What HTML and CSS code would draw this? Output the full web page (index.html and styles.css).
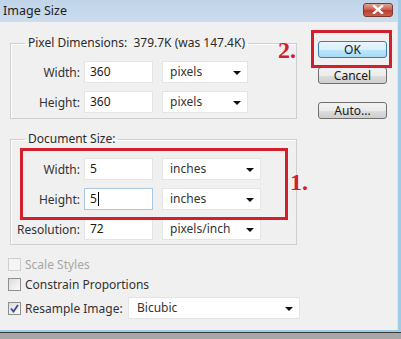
FILE: index.html
```html
<!DOCTYPE html>
<html>
<head>
<meta charset="utf-8">
<link rel="stylesheet" href="styles.css">
</head>
<body>
<div class="window">
  <div class="titlebar">
    <span class="title">Image Size</span>
    <span class="close"><svg width="14" height="9" viewBox="0 0 14 9"><path d="M3 1 L11 8 M11 1 L3 8" stroke="#fff" stroke-width="2.4" stroke-linecap="square"/></svg></span>
  </div>
  <div class="content">
    <div class="main">
      <fieldset class="group group-pixel">
        <legend>Pixel Dimensions:&nbsp; 379.7K (was 147.4K)</legend>
        <div class="row">
          <span class="label">Width:</span>
          <span class="input">360</span>
          <span class="select sel-short">pixels<i class="arrow"></i></span>
        </div>
        <div class="row">
          <span class="label">Height:</span>
          <span class="input">360</span>
          <span class="select sel-short">pixels<i class="arrow"></i></span>
        </div>
      </fieldset>
      <fieldset class="group group-doc">
        <legend>Document Size:</legend>
        <div class="row">
          <span class="label">Width:</span>
          <span class="input">5</span>
          <span class="select">inches<i class="arrow"></i></span>
        </div>
        <div class="row">
          <span class="label">Height:</span>
          <span class="input focused">5<i class="caret"></i></span>
          <span class="select">inches<i class="arrow"></i></span>
        </div>
        <div class="row">
          <span class="label">Resolution:</span>
          <span class="input">72</span>
          <span class="select">pixels/inch<i class="arrow"></i></span>
        </div>
      </fieldset>
      <div class="checks">
        <div class="check disabled"><span class="box"></span>Scale Styles</div>
        <div class="check"><span class="box"></span>Constrain Proportions</div>
        <div class="check check-resample"><span class="box checked"><svg width="9" height="9" viewBox="0 0 9 9"><path d="M1 4.5 L3.5 7.5 L8 1" fill="none" stroke="#3b4a8c" stroke-width="1.8"/></svg></span><span class="check-text">Resample Image:</span><span class="select sel-wide">Bicubic<i class="arrow"></i></span></div>
      </div>
    </div>
    <div class="side">
      <span class="btn btn-default">OK</span>
      <span class="btn">Cancel</span>
      <span class="btn btn-auto">Auto...</span>
    </div>
  </div>
  <div class="bottom"></div>
  <div class="mark mark-box1"></div>
  <div class="mark mark-box2"></div>
  <div class="mark-num num1">1.</div>
  <div class="mark-num num2">2.</div>
</div>
</body>
</html>
```
FILE: styles.css
```css
* { box-sizing: border-box; }
html, body { margin: 0; padding: 0; }
body {
  background: #a7a7a7;
  font-family: "Noto Sans", "Open Sans", sans-serif;
  font-size: 12px;
  color: #1a1a1a;
}
.window {
  position: relative;
  width: 401px;
  height: 339px;
  overflow: hidden;
  background: #a7a7a7;
}
.titlebar {
  height: 22px;
  display: flex;
  align-items: center;
  justify-content: space-between;
  padding: 0 5px 0 3px;
  background: linear-gradient(#c0d4e9, #cbdcee);
  border-right: 3px solid #9fcbe6;
}
.title {
  font-size: 12.5px;
  color: #1e1e1e;
  line-height: 16px;
}
.close {
  width: 30px;
  height: 14px;
  margin-top: -3px;
  border: 1px solid #7b3a30;
  border-radius: 3px;
  background: linear-gradient(#e0a595, #c9594a 50%, #b83c2d 51%, #c9604c);
  display: flex;
  align-items: center;
  justify-content: center;
}
.close svg { display: block; }
.content {
  height: 308px;
  display: flex;
  background: #f0f0f0;
  border-right: 3px solid #9fcbe6;
  box-shadow: inset -1px 0 0 #e4e4e4;
}
.main {
  width: 297px;
  flex-shrink: 0;
  padding-left: 8px;
}
.group {
  margin: 0 0 0 2px;
  padding: 0;
  border: 1px solid #cfcfcf;
  width: 287px;
  box-shadow: 1px 1px 0 #fff inset;
}
.group legend {
  margin-left: 14px;
  padding: 0 3px;
  line-height: 16px;
  color: #2a2a2a;
}
.group-pixel {
  margin-top: 13px;
  padding: 10px 0 5px 0;
}
.group-doc {
  margin-top: 12px;
  padding: 11px 0 4px 0;
}
.row {
  display: flex;
  align-items: center;
  height: 22px;
  margin-bottom: 8px;
}
.row:last-child { margin-bottom: 0; }
.label {
  width: 69px;
  text-align: right;
  color: #333;
  margin-right: 4px;
}
.input {
  width: 69px;
  height: 22px;
  background: #fff;
  border: 1px solid #e4e4e4;
  padding-left: 5px;
  line-height: 20px;
  display: flex;
  align-items: center;
}
.input.focused { border-color: #a9c6e2; }
.caret {
  display: inline-block;
  width: 1px;
  height: 14px;
  background: #000;
  margin-left: 1px;
}
.select {
  position: relative;
  flex-shrink: 0;
  width: 99px;
  height: 22px;
  margin-left: 9px;
  background: #fff;
  border: 1px solid #e4e4e4;
  padding-left: 7px;
  line-height: 20px;
  color: #333;
}
.sel-short { width: 86px; }
.arrow {
  position: absolute;
  right: 6px;
  top: 9px;
  width: 0;
  height: 0;
  border-left: 4px solid transparent;
  border-right: 4px solid transparent;
  border-top: 4px solid #111;
}
.checks {
  padding-top: 9px;
}
.check {
  display: flex;
  align-items: center;
  height: 20px;
  color: #333;
  white-space: nowrap;
}
.check.disabled { color: #a8a8a8; }
.box {
  flex-shrink: 0;
  width: 13px;
  height: 13px;
  border: 1px solid #8e8f8f;
  background: linear-gradient(135deg, #dcdcdc, #fbfbfb);
  margin-right: 4px;
  display: flex;
  align-items: center;
  justify-content: center;
}
.check.disabled .box { border-color: #cfcfcf; background: #f4f4f4; }
.check-resample {
  margin-top: 3px;
  height: 22px;
}
.check-text {
  width: 103px;
  flex-shrink: 0;
}
.sel-wide {
  width: 172px;
  margin-left: 0;
  padding-left: 8px;
}
.side {
  display: flex;
  flex-direction: column;
  align-items: flex-start;
  padding: 19px 0 0 21px;
}
.btn {
  width: 69px;
  height: 17px;
  border: 1px solid #707070;
  border-radius: 3px;
  background: linear-gradient(#f2f2f2, #ebebeb 50%, #dddddd 51%, #cfcfcf);
  display: flex;
  align-items: center;
  justify-content: center;
  color: #1a1a1a;
  margin-bottom: 9px;
}
.btn-default {
  border-color: #3c7fb1;
  background: linear-gradient(#eaf6fd, #d9f0fc 50%, #bee6fd 51%, #a7d9f5);
}
.btn-auto { margin-top: 9px; }
.bottom {
  height: 9px;
  border-top: 2px solid #9fcbe6;
  box-shadow: inset 0 1px 0 #3a3a3a;
  background: #a7a7a7;
}
.mark {
  position: absolute;
  border: 3px solid #d1202c;
}
.mark-box1 { left: 20px; top: 148px; width: 268px; height: 72px; }
.mark-box2 { left: 311px; top: 30px; width: 81px; height: 38px; }
.mark-num {
  position: absolute;
  font-family: "Liberation Serif", serif;
  font-weight: bold;
  font-size: 24px;
  color: #d1202c;
  line-height: 24px;
}
.num1 { left: 290px; top: 170px; }
.num2 { left: 278px; top: 38px; }
```
